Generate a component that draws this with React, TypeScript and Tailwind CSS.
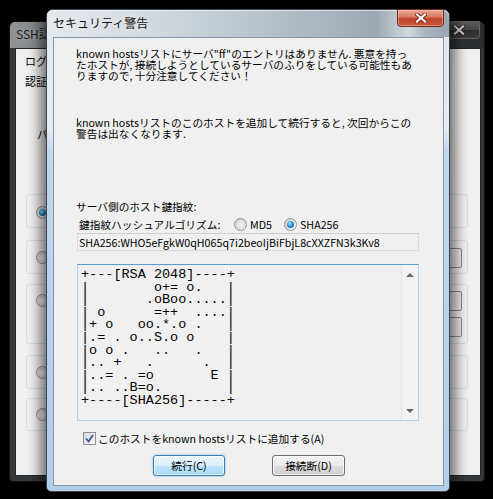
import React from "react";

const ART = [
  "+---[RSA 2048]----+",
  "|        o+= o.   |",
  "|       .oBoo.....|",
  "| o      =++  ....|",
  "|+ o   oo.*.o .   |",
  "|.= . o..S.o o    |",
  "|o o .   ..   .   |",
  "|.. +   .      .  |",
  "|..= . =o       E |",
  "|.. ..B=o.        |",
  "+----[SHA256]-----+",
].join("\n");

function Radio({ checked }: { checked?: boolean }) {
  return (
    <span className="inline-flex w-[13px] h-[13px] shrink-0 items-center justify-center rounded-full border border-[#8e8f8f] bg-[linear-gradient(135deg,#cfcfcf,#f6f6f6)]">
      {checked ? (
        <span className="w-[7px] h-[7px] rounded-full bg-[radial-gradient(circle_at_40%_35%,#a8e4ff_0%,#2b96d8_45%,#0b4a80_100%)]" />
      ) : (
        <span className="w-[9px] h-[9px] rounded-full border border-[#cfcfcf] bg-[linear-gradient(135deg,#dedede,#fbfbfb)]" />
      )}
    </span>
  );
}

function CloseX({ color, outline }: { color: string; outline: string }) {
  return (
    <svg width="12" height="10" viewBox="0 0 12 10">
      <path d="M2 1.5 L10 8.5 M10 1.5 L2 8.5" stroke={outline} strokeWidth="3.8" strokeLinecap="square" />
      <path d="M2 1.5 L10 8.5 M10 1.5 L2 8.5" stroke={color} strokeWidth="2.2" strokeLinecap="square" />
    </svg>
  );
}

function BgBox({ h, children }: { h: string; children?: React.ReactNode }) {
  return (
    <div className={`ml-[1px] w-[442px] ${h} rounded-[3px] border border-[#d5dfe5] flex items-start`}>
      {children}
    </div>
  );
}

export default function App() {
  return (
    <div className="relative w-[493px] h-[499px] bg-black overflow-hidden font-['Noto_Sans_CJK_JP',sans-serif] text-black">
      {/* Background window: SSH認証 */}
      <div className="absolute left-[9px] top-[21px] w-[476px] h-[461px] rounded-t-[6px] rounded-b-[4px] border border-[#121212] bg-[#35383b] flex flex-col">
        <div className="h-[26px] shrink-0 flex items-start rounded-t-[5px] bg-[linear-gradient(90deg,#8e9295_0%,#7d8185_12%,#5a5d60_50%,#34373a_88%,#2b2d2f_100%)]">
          <span className="ml-[6px] mt-[5px] text-[12px] leading-[13px] text-[#1b1b1b] whitespace-nowrap [text-shadow:0_0_5px_rgba(255,255,255,0.35)]">
            SSH認証
          </span>
          <div className="ml-auto mr-[4px] -mt-[1px] w-[43px] h-[18px] rounded-b-[4px] border border-[#626262] bg-[linear-gradient(180deg,#5c5c5c_0%,#444_50%,#2d2d2d_51%,#3b3b3b_100%)] flex items-center justify-center">
            <CloseX color="#cfcfcf" outline="#222" />
          </div>
        </div>
        <div className="flex-1 ml-[5px] mr-[3px] mb-[5px] border border-[#262626] bg-[#f0f0f0] pl-[9px] pt-[6px] flex flex-col text-[11px] leading-[12px]">
          <div className="whitespace-nowrap">ログイン中: 192.168.1.10</div>
          <div className="mt-[8px] whitespace-nowrap">認証が必要です.</div>
          <div className="mt-[41px] ml-[12px] whitespace-nowrap">パスフレーズ(P):</div>
          <div className="mt-[54px] flex flex-col">
            <BgBox h="h-[34px]">
              <span className="ml-[9px] mt-[10px]"><Radio checked /></span>
            </BgBox>
            <div className="mt-[12px]">
              <BgBox h="h-[34px]">
                <span className="ml-[9px] mt-[10px]"><Radio /></span>
                <div className="ml-auto mr-[5px] mt-[7px] w-[80px] h-[20px] rounded-[2px] border border-[#8a8a8a] bg-[#ececec]" />
              </BgBox>
            </div>
            <div className="mt-[10px]">
              <BgBox h="h-[60px]">
                <span className="ml-[9px] mt-[9px]"><Radio /></span>
                <div className="ml-auto mr-[5px] mt-[6px] flex flex-col gap-[6px]">
                  <div className="w-[80px] h-[20px] rounded-[2px] border border-[#8a8a8a] bg-[#ececec]" />
                  <div className="w-[80px] h-[20px] rounded-[2px] border border-[#8a8a8a] bg-[#ececec]" />
                </div>
              </BgBox>
            </div>
            <div className="mt-[11px]">
              <BgBox h="h-[34px]">
                <span className="ml-[9px] mt-[10px]"><Radio /></span>
              </BgBox>
            </div>
            <div className="mt-[9px]">
              <BgBox h="h-[33px]">
                <span className="ml-[9px] mt-[9px]"><Radio /></span>
              </BgBox>
            </div>
          </div>
        </div>
      </div>

      {/* Front dialog: セキュリティ警告 */}
      <div className="absolute left-[46px] top-[9px] w-[404px] h-[483px] rounded-t-[7px] rounded-b-[5px] border border-[#3a4553] bg-[linear-gradient(180deg,#dfe6ec_0%,#e7edf2_24%,#c0d6ec_30%,#b3cee9_100%)] shadow-[0_0_14px_5px_rgba(0,0,0,0.6)] flex flex-col">
        <div className="h-[27px] shrink-0 flex items-start rounded-t-[6px] bg-[linear-gradient(90deg,#e3e8ed_0%,#d3dae0_25%,#bcc5cd_50%,#a6b1bb_72%,#9ca8b3_82%,#d2d9df_90%,#a9b4be_94%,#9aa6b1_100%)] shadow-[inset_0_1px_0_rgba(255,255,255,0.6)]">
          <span className="ml-[6px] mt-[6px] text-[12px] leading-[13px] text-[#111] whitespace-nowrap [text-shadow:0_0_6px_rgba(255,255,255,0.9)]">
            セキュリティ警告
          </span>
          <div className="ml-auto mr-[5px] -mt-[1px] w-[47px] h-[18px] rounded-b-[4px] border border-[#6b2a1e] bg-[linear-gradient(180deg,#e9a896_0%,#d97660_45%,#c2442c_52%,#c9553a_100%)] shadow-[inset_0_0_0_1px_rgba(255,210,190,0.45)] flex items-center justify-center">
            <CloseX color="#ffffff" outline="#6a2012" />
          </div>
        </div>

        <div className="flex-1 ml-[6px] mr-[5px] mb-[5px] border border-[#8595a6] bg-[#f0f0f0] pl-[22px] pt-[10px] flex flex-col text-[10.7px] leading-[11px]">
          <div className="whitespace-nowrap">
            known hostsリストにサーバ"ff"のエントリはありません. 悪意を持っ
            <br />
            たホストが, 接続しようとしているサーバのふりをしている可能性もあ
            <br />
            りますので, 十分注意してください！
          </div>
          <div className="mt-[36px] whitespace-nowrap">
            known hostsリストのこのホストを追加して続行すると, 次回からこの
            <br />
            警告は出なくなります.
          </div>
          <div className="mt-[62px] whitespace-nowrap">サーバ側のホスト鍵指紋:</div>
          <div className="mt-[6px] ml-[3px] h-[13px] flex items-center">
            <span className="w-[155px] whitespace-nowrap">鍵指紋ハッシュアルゴリズム:</span>
            <div className="w-[50px] flex items-center">
              <Radio />
              <span className="ml-[3px]">MD5</span>
            </div>
            <div className="flex items-center">
              <Radio checked />
              <span className="ml-[3px]">SHA256</span>
            </div>
          </div>
          <div className="mt-[2px] ml-[1px] w-[342px] h-[18px] border border-[#dadada] border-t-[#cdcdcd] pl-[1px] flex items-center whitespace-nowrap">
            SHA256:WHO5eFgkW0qH065q7i2beoIjBiFbjL8cXXZFN3k3Kv8
          </div>
          <div className="mt-[13px] ml-[1px] w-[342px] h-[157px] border border-[#b5cfe7] border-t-[#5e9ad2] flex">
            <pre className="flex-1 m-0 pl-[3px] pt-[4px] font-['Liberation_Mono',monospace] text-[13.5px] leading-[12.6px] text-black">
              {ART}
            </pre>
            <div className="w-[17px] border-l border-[#e6e6e6] bg-[#f3f3f3] flex flex-col justify-between items-center pt-[8px] pb-[7px]">
              <svg width="8" height="4" viewBox="0 0 8 4">
                <path d="M0 4 L4 0 L8 4 Z" fill="#6a6a6a" />
              </svg>
              <svg width="8" height="4" viewBox="0 0 8 4">
                <path d="M0 0 L8 0 L4 4 Z" fill="#6a6a6a" />
              </svg>
            </div>
          </div>
          <div className="mt-[11px] ml-[7px] h-[13px] flex items-center">
            <span className="w-[13px] h-[13px] shrink-0 border border-[#8e8f8f] bg-[linear-gradient(135deg,#d8d8d8,#fafafa)] flex items-center justify-center">
              <svg width="11" height="11" viewBox="0 0 11 11">
                <path d="M2 5.5 L4.5 8.5 L9 2" stroke="#3e5a94" strokeWidth="1.9" fill="none" />
              </svg>
            </span>
            <span className="ml-[2px] whitespace-nowrap">このホストをknown hostsリストに追加する(A)</span>
          </div>
          <div className="mt-[10px] h-[21px] flex">
            <button className="ml-[77px] w-[72px] h-[21px] rounded-[3px] border border-[#3c7fb1] bg-[linear-gradient(180deg,#eaf6fd_0%,#d9f0fc_50%,#bee6fd_51%,#a7d9f5_100%)] shadow-[inset_0_0_0_1px_rgba(255,255,255,0.7),0_0_2px_rgba(60,160,230,0.8)] flex items-center justify-center text-[10.7px] leading-[11px] text-black">
              続行(C)
            </button>
            <button className="ml-[47px] w-[73px] h-[21px] rounded-[3px] border border-[#707070] bg-[linear-gradient(180deg,#f2f2f2_0%,#ebebeb_50%,#dddddd_51%,#cfcfcf_100%)] shadow-[inset_0_0_0_1px_rgba(255,255,255,0.7)] flex items-center justify-center text-[10.7px] leading-[11px] text-black">
              接続断(D)
            </button>
          </div>
        </div>
      </div>
    </div>
  );
}
